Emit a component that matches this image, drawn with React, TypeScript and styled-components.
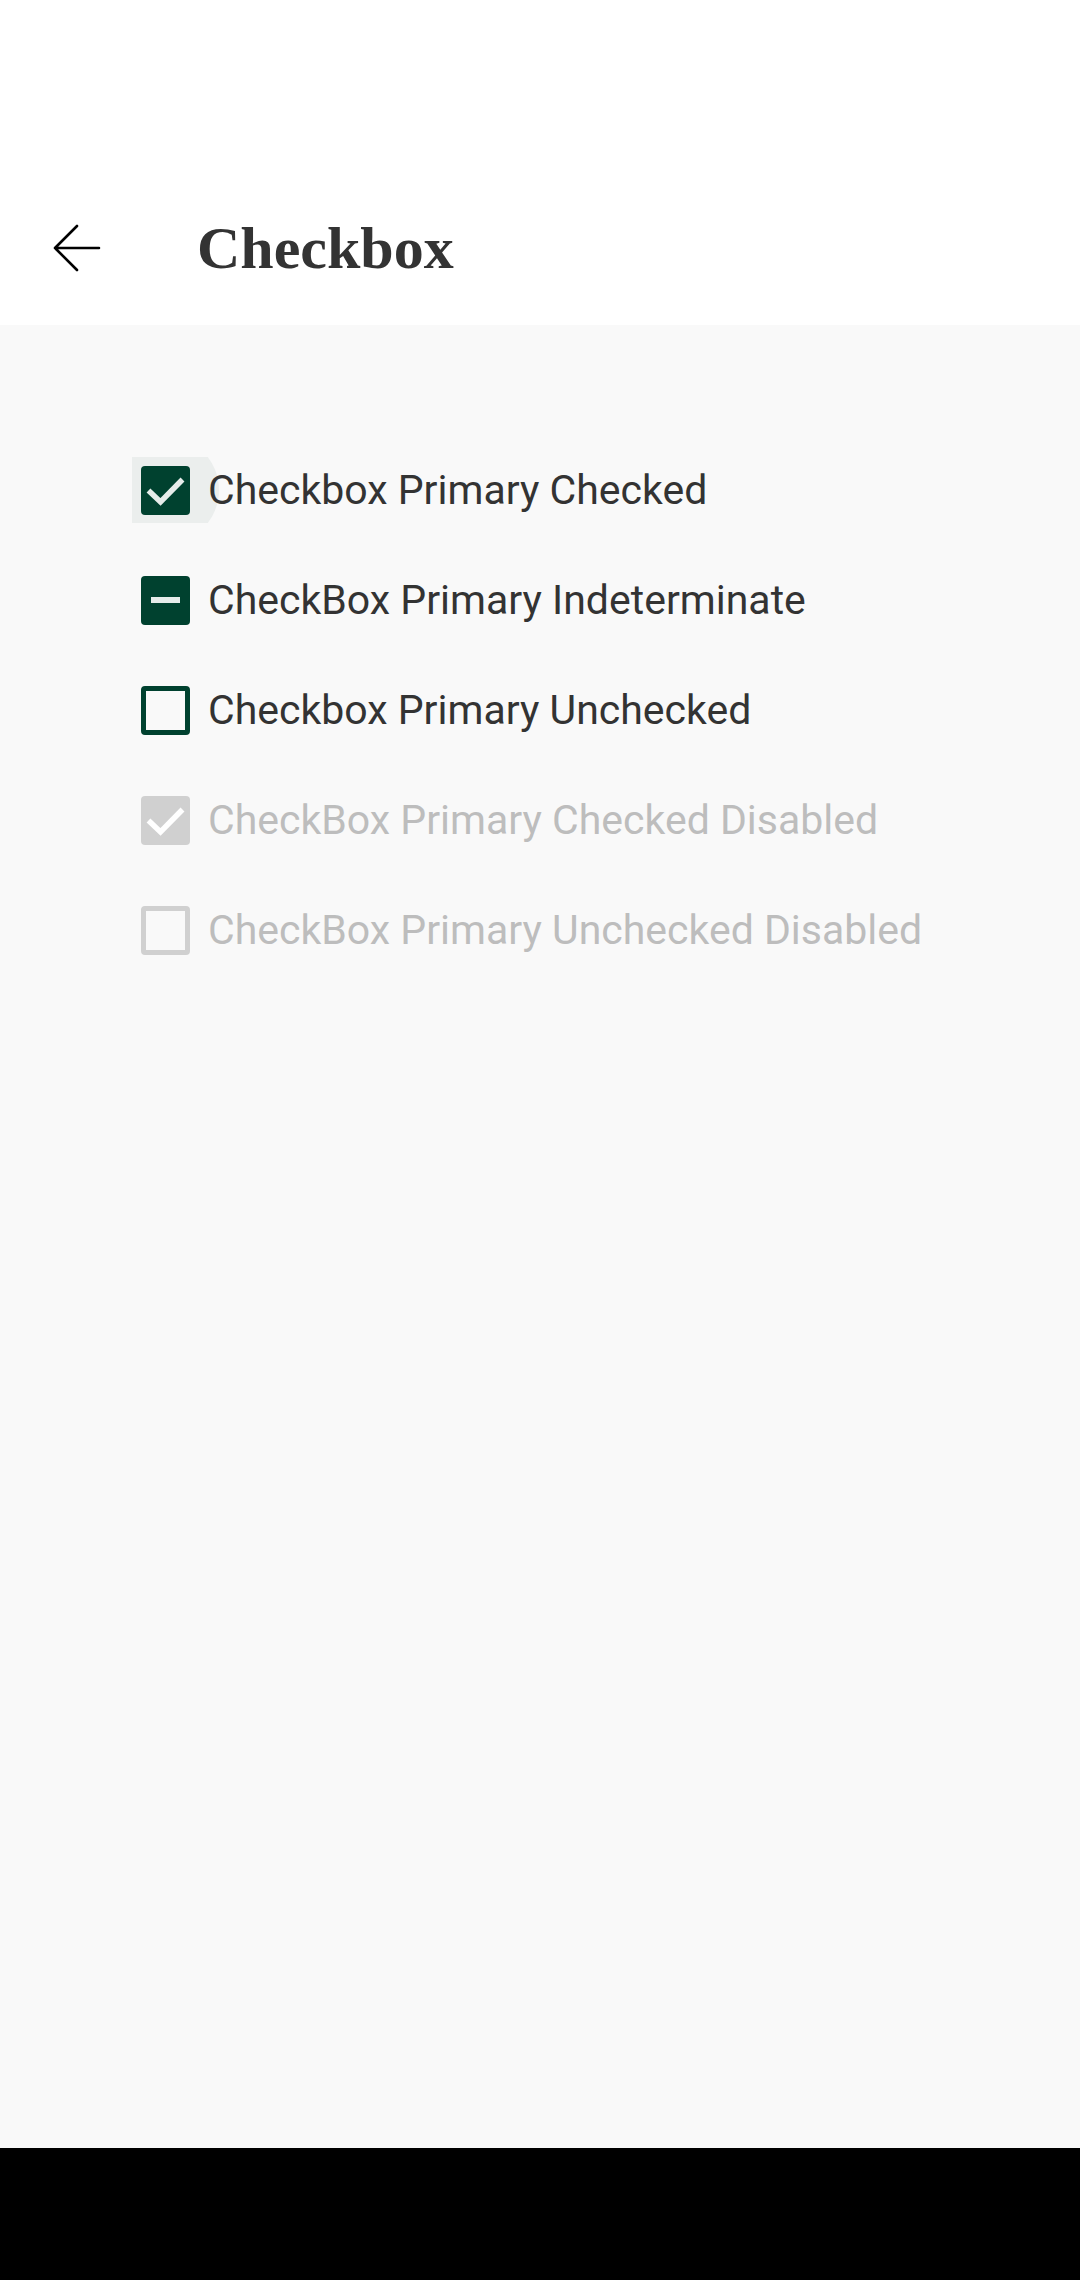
import React from "react";
import styled, { createGlobalStyle, css } from "styled-components";

const GlobalStyle = createGlobalStyle`
  html, body {
    margin: 0;
    padding: 0;
    background: #f9f9f9;
  }
  * { box-sizing: border-box; }
`;

const Page = styled.div`
  display: flex;
  flex-direction: column;
  width: 1080px;
  height: 2280px;
  background: #f9f9f9;
`;

const Header = styled.header`
  display: flex;
  align-items: center;
  height: 325px;
  padding-top: 170px;
  background: #ffffff;
`;

const BackButton = styled.button`
  display: flex;
  align-items: center;
  justify-content: center;
  width: 48px;
  height: 48px;
  margin-left: 53px;
  padding: 0;
  border: none;
  background: transparent;
`;

const Title = styled.h1`
  margin: 0 0 0 96px;
  font-family: "Liberation Serif", "DejaVu Serif", serif;
  font-weight: 700;
  font-size: 60px;
  line-height: 1;
  color: #333333;
`;

const Content = styled.main`
  flex: 1;
  display: flex;
  flex-direction: column;
  gap: 44px;
  padding: 132px 0 0 132px;
`;

const Row = styled.label`
  display: flex;
  align-items: center;
  height: 66px;
`;

const CheckArea = styled.span`
  position: relative;
  display: flex;
  align-items: center;
  justify-content: center;
  width: 66px;
  height: 66px;
  flex-shrink: 0;
`;

const Halo = styled.span`
  position: absolute;
  left: -21px;
  top: -21px;
  width: 108px;
  height: 108px;
  border-radius: 50%;
  background: #ebeeed;
  clip-path: inset(21px 0 21px 21px);
`;

type BoxKind = "checked" | "indeterminate" | "unchecked";

const Box = styled.span<{ $kind: BoxKind; $disabled?: boolean }>`
  position: relative;
  display: flex;
  align-items: center;
  justify-content: center;
  width: 49px;
  height: 49px;
  border-radius: 4px;
  ${({ $kind, $disabled }) => {
    const c = $disabled ? "#d0d0d0" : "#00412f";
    return $kind === "unchecked"
      ? css`
          border: 5px solid ${c};
          background: transparent;
        `
      : css`
          background: ${c};
        `;
  }}
`;

const Dash = styled.span`
  display: block;
  width: 29px;
  height: 6px;
  background: #e6ecea;
`;

const Label = styled.span<{ $disabled?: boolean }>`
  position: relative;
  margin-left: 10px;
  font-family: Roboto, "Liberation Sans", sans-serif;
  font-size: 41px;
  letter-spacing: 0;
  color: ${({ $disabled }) => ($disabled ? "#bdbdbd" : "#333333")};
  white-space: nowrap;
`;

const NavBar = styled.div`
  height: 132px;
  background: #000000;
  flex-shrink: 0;
`;

const CheckMark = ({ color }: { color: string }) => (
  <svg width="49" height="49" viewBox="0 0 49 49" fill="none">
    <path
      d="M7.5 24.5 L19.5 36 L41.5 13.5"
      stroke={color}
      strokeWidth="5.5"
      strokeLinecap="butt"
      strokeLinejoin="miter"
    />
  </svg>
);

const BackArrow = () => (
  <svg width="48" height="48" viewBox="0 0 48 48" fill="none">
    <path
      d="M2 24 H46 M24 2 L2 24 L24 46"
      stroke="#000"
      strokeWidth="2.6"
      strokeLinecap="round"
      strokeLinejoin="round"
    />
  </svg>
);

type Item = { label: string; kind: BoxKind; disabled?: boolean; focused?: boolean };

const items: Item[] = [
  { label: "Checkbox Primary Checked", kind: "checked", focused: true },
  { label: "CheckBox Primary Indeterminate", kind: "indeterminate" },
  { label: "Checkbox Primary Unchecked", kind: "unchecked" },
  { label: "CheckBox Primary Checked Disabled", kind: "checked", disabled: true },
  { label: "CheckBox Primary Unchecked Disabled", kind: "unchecked", disabled: true },
];

export default function App() {
  return (
    <>
      <GlobalStyle />
      <Page>
        <Header>
          <BackButton aria-label="Back">
            <BackArrow />
          </BackButton>
          <Title>Checkbox</Title>
        </Header>
        <Content>
          {items.map((it) => (
            <Row key={it.label}>
              <CheckArea>
                {it.focused && <Halo />}
                <Box $kind={it.kind} $disabled={it.disabled}>
                  {it.kind === "checked" && (
                    <CheckMark color={it.disabled ? "#ffffff" : "#e6ecea"} />
                  )}
                  {it.kind === "indeterminate" && <Dash />}
                </Box>
              </CheckArea>
              <Label $disabled={it.disabled}>{it.label}</Label>
            </Row>
          ))}
        </Content>
        <NavBar />
      </Page>
    </>
  );
}
